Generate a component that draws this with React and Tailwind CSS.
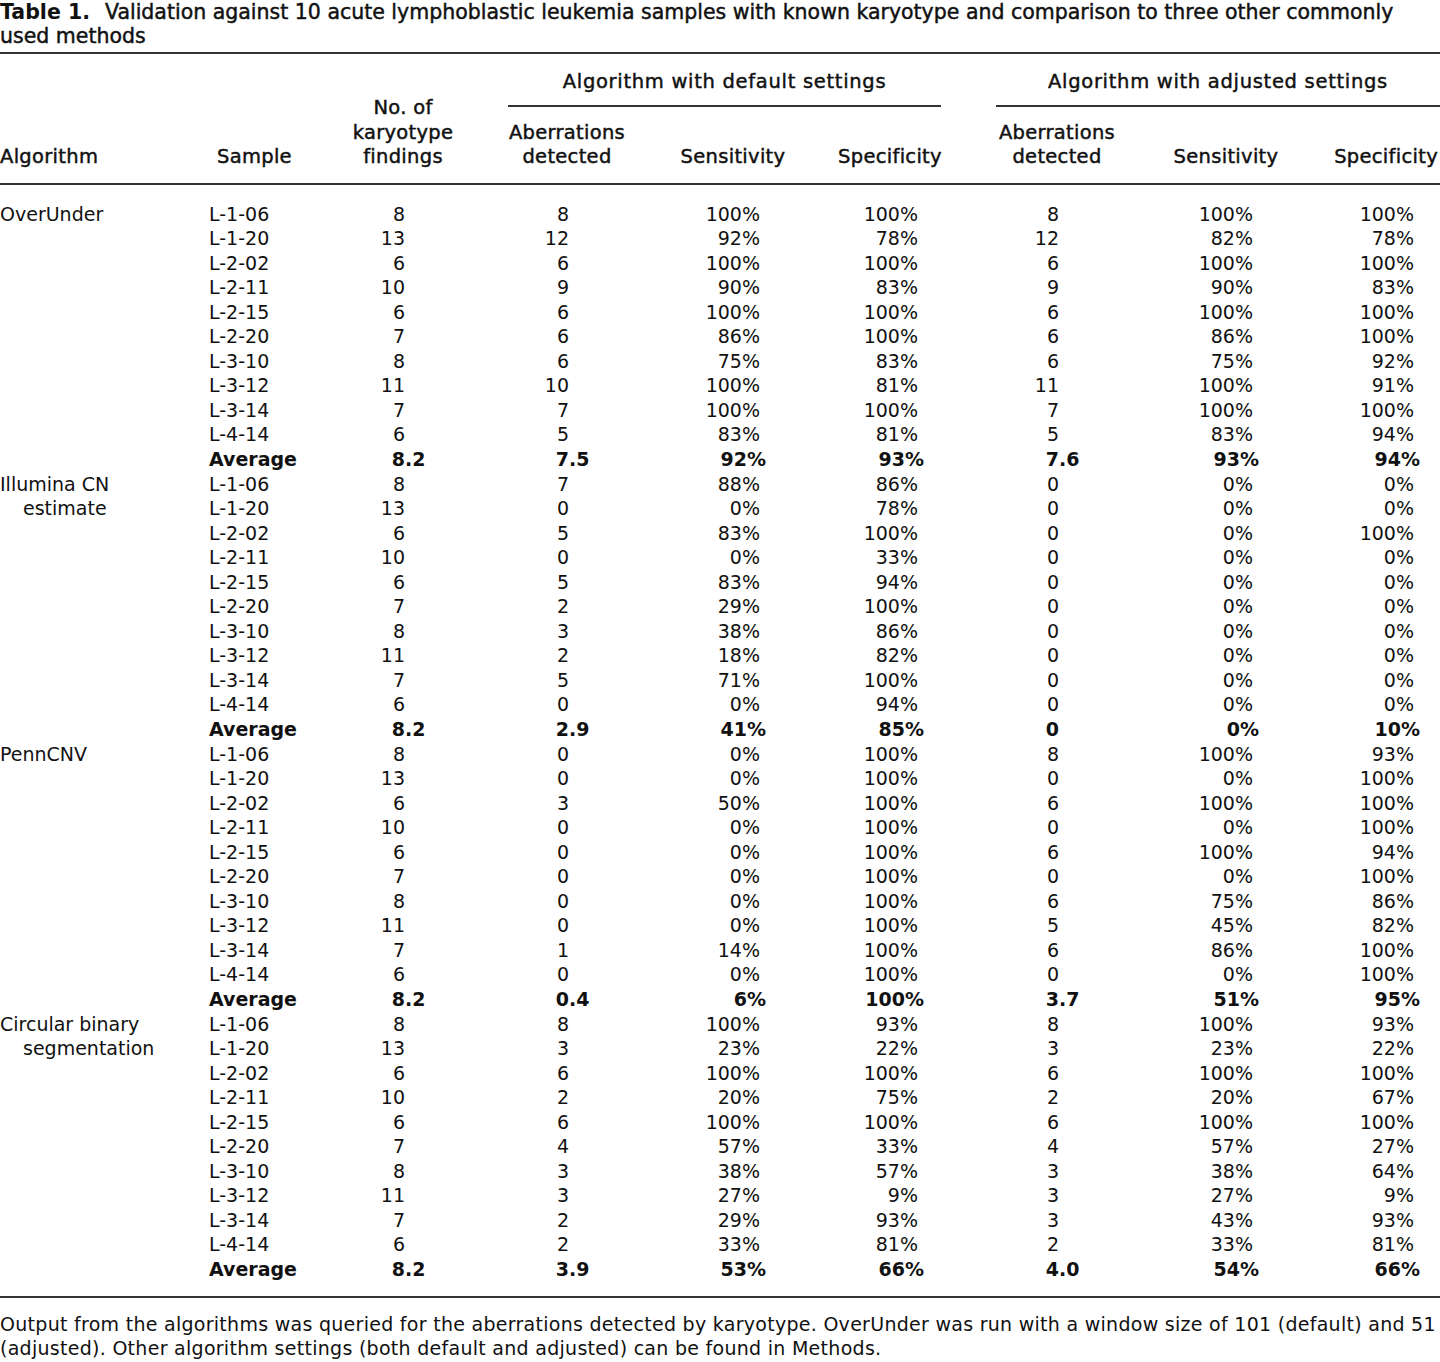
import React from 'react';

// Table 1 — validation against 10 ALL samples
const SAMPLES = ['L-1-06', 'L-1-20', 'L-2-02', 'L-2-11', 'L-2-15', 'L-2-20', 'L-3-10', 'L-3-12', 'L-3-14', 'L-4-14'];
const KARYO = ['8', '13', '6', '10', '6', '7', '8', '11', '7', '6'];

const GROUPS = [
  {
    name: ['OverUnder'],
    rows: [
      ['8', '100%', '100%', '8', '100%', '100%'],
      ['12', '92%', '78%', '12', '82%', '78%'],
      ['6', '100%', '100%', '6', '100%', '100%'],
      ['9', '90%', '83%', '9', '90%', '83%'],
      ['6', '100%', '100%', '6', '100%', '100%'],
      ['6', '86%', '100%', '6', '86%', '100%'],
      ['6', '75%', '83%', '6', '75%', '92%'],
      ['10', '100%', '81%', '11', '100%', '91%'],
      ['7', '100%', '100%', '7', '100%', '100%'],
      ['5', '83%', '81%', '5', '83%', '94%'],
    ],
    avg: ['7.5', '92%', '93%', '7.6', '93%', '94%'],
  },
  {
    name: ['Illumina CN', 'estimate'],
    rows: [
      ['7', '88%', '86%', '0', '0%', '0%'],
      ['0', '0%', '78%', '0', '0%', '0%'],
      ['5', '83%', '100%', '0', '0%', '100%'],
      ['0', '0%', '33%', '0', '0%', '0%'],
      ['5', '83%', '94%', '0', '0%', '0%'],
      ['2', '29%', '100%', '0', '0%', '0%'],
      ['3', '38%', '86%', '0', '0%', '0%'],
      ['2', '18%', '82%', '0', '0%', '0%'],
      ['5', '71%', '100%', '0', '0%', '0%'],
      ['0', '0%', '94%', '0', '0%', '0%'],
    ],
    avg: ['2.9', '41%', '85%', '0', '0%', '10%'],
  },
  {
    name: ['PennCNV'],
    rows: [
      ['0', '0%', '100%', '8', '100%', '93%'],
      ['0', '0%', '100%', '0', '0%', '100%'],
      ['3', '50%', '100%', '6', '100%', '100%'],
      ['0', '0%', '100%', '0', '0%', '100%'],
      ['0', '0%', '100%', '6', '100%', '94%'],
      ['0', '0%', '100%', '0', '0%', '100%'],
      ['0', '0%', '100%', '6', '75%', '86%'],
      ['0', '0%', '100%', '5', '45%', '82%'],
      ['1', '14%', '100%', '6', '86%', '100%'],
      ['0', '0%', '100%', '0', '0%', '100%'],
    ],
    avg: ['0.4', '6%', '100%', '3.7', '51%', '95%'],
  },
  {
    name: ['Circular binary', 'segmentation'],
    rows: [
      ['8', '100%', '93%', '8', '100%', '93%'],
      ['3', '23%', '22%', '3', '23%', '22%'],
      ['6', '100%', '100%', '6', '100%', '100%'],
      ['2', '20%', '75%', '2', '20%', '67%'],
      ['6', '100%', '100%', '6', '100%', '100%'],
      ['4', '57%', '33%', '4', '57%', '27%'],
      ['3', '38%', '57%', '3', '38%', '64%'],
      ['3', '27%', '9%', '3', '27%', '9%'],
      ['2', '29%', '93%', '3', '43%', '93%'],
      ['2', '33%', '81%', '2', '33%', '81%'],
    ],
    avg: ['3.9', '53%', '66%', '4.0', '54%', '66%'],
  },
];

const COLS = 'grid grid-cols-[200px_100px_206px_122px_210px_104px_230px_108px_160px]';
const SEMI = '[-webkit-text-stroke:0.45px_#111]';

// decimal aligned number: integer part right-aligned in a fixed box
const Num = ({ v, box, bold }) => {
  const [int, frac] = v.split('.');
  return (
    <div className={`flex whitespace-nowrap ${bold ? 'font-bold' : ''}`}>
      <span className={`${box} text-right shrink-0`}>{int}</span>
      {frac !== undefined && <span>.{frac}</span>}
    </div>
  );
};

const Pct = ({ v, pad, padBold, bold }) => (
  <div className={`text-right whitespace-nowrap ${bold ? `font-bold ${padBold}` : pad}`}>{v}</div>
);

const Row = ({ algo, algoIndent, sample, karyo, cells, bold }) => (
  <div className={`${COLS} h-[24.56px] leading-[24.56px]`}>
    <div className={`whitespace-nowrap ${algoIndent ? 'pl-[23px]' : ''}`}>{algo}</div>
    <div className={`pl-[9px] whitespace-nowrap ${bold ? 'font-bold' : ''}`}>{sample}</div>
    <Num v={karyo} box="w-[105px]" bold={bold} />
    <Num v={cells[0]} box="w-[63px]" bold={bold} />
    <Pct v={cells[1]} pad="pr-[78px]" padBold="pr-[72px]" bold={bold} />
    <Pct v={cells[2]} pad="pr-[24px]" padBold="pr-[18px]" bold={bold} />
    <Num v={cells[3]} box="w-[117px]" bold={bold} />
    <Pct v={cells[4]} pad="pr-[27px]" padBold="pr-[21px]" bold={bold} />
    <Pct v={cells[5]} pad="pr-[26px]" padBold="pr-[20px]" bold={bold} />
  </div>
);

const App = () => {
  return (
    <div className="w-[1440px] bg-white text-[#111] text-[19px] font-['DejaVu_Sans','Verdana',sans-serif]">
      {/* title */}
      <div className="leading-[24px] text-[20.5px]">
        <div className="flex whitespace-nowrap">
          <span className="font-bold mr-[15px]">Table 1.</span>
          <span className={SEMI}>Validation against 10 acute lymphoblastic leukemia samples with known karyotype and comparison to three other commonly</span>
        </div>
        <div className={SEMI}>used methods</div>
      </div>
      <div className="mt-[4px] h-[2px] bg-[#333]" />

      {/* column heads */}
      <div className={`flex items-end pt-[16px] pb-[13px] leading-[24.5px] text-[19.5px] tracking-[0.3px] ${SEMI}`}>
        <div className="w-[200px] shrink-0">Algorithm</div>
        <div className="w-[100px] shrink-0 pl-[17px]">Sample</div>
        <div className="w-[206px] shrink-0 text-center">
          <div>No. of</div>
          <div>karyotype</div>
          <div>findings</div>
        </div>
        <div className="w-[436px] shrink-0 flex flex-col">
          <div className="ml-[2px] mr-[1px] text-center leading-[24px] tracking-[0.7px]">Algorithm with default settings</div>
          <div className="ml-[2px] mr-[1px] mt-[11px] h-[1.5px] bg-[#333]" />
          <div className="grid grid-cols-[122px_210px_104px] items-end mt-[14px]">
            <div className="text-center">
              <div>Aberrations</div>
              <div>detected</div>
            </div>
            <div className="text-center">Sensitivity</div>
            <div className="text-center">Specificity</div>
          </div>
        </div>
        <div className="w-[498px] shrink-0 flex flex-col">
          <div className="ml-[54px] text-center leading-[24px] tracking-[0.7px]">Algorithm with adjusted settings</div>
          <div className="ml-[54px] mt-[11px] h-[1.5px] bg-[#333]" />
          <div className="grid grid-cols-[230px_108px_160px] items-end mt-[14px]">
            <div className="text-center">
              <div>Aberrations</div>
              <div>detected</div>
            </div>
            <div className="text-center">Sensitivity</div>
            <div className="text-right pr-[2px]">Specificity</div>
          </div>
        </div>
      </div>
      <div className="h-[2px] bg-[#333]" />

      {/* body */}
      <div className="pt-[17px]">
        {GROUPS.map((g) => (
          <div key={g.name[0]}>
            {g.rows.map((r, i) => (
              <Row
                key={SAMPLES[i]}
                algo={g.name[i] || ''}
                algoIndent={i > 0}
                sample={SAMPLES[i]}
                karyo={KARYO[i]}
                cells={r}
              />
            ))}
            <Row algo="" sample="Average" karyo="8.2" cells={g.avg} bold />
          </div>
        ))}
      </div>
      <div className="mt-[14px] h-[2px] bg-[#333]" />

      {/* footnote */}
      <p className="mt-[14px] leading-[24px] tracking-[0.28px]">
        Output from the algorithms was queried for the aberrations detected by karyotype. OverUnder was run with a window size of 101 (default) and 51 (adjusted). Other algorithm settings (both default and adjusted) can be found in Methods.
      </p>
    </div>
  );
};

export default App;
